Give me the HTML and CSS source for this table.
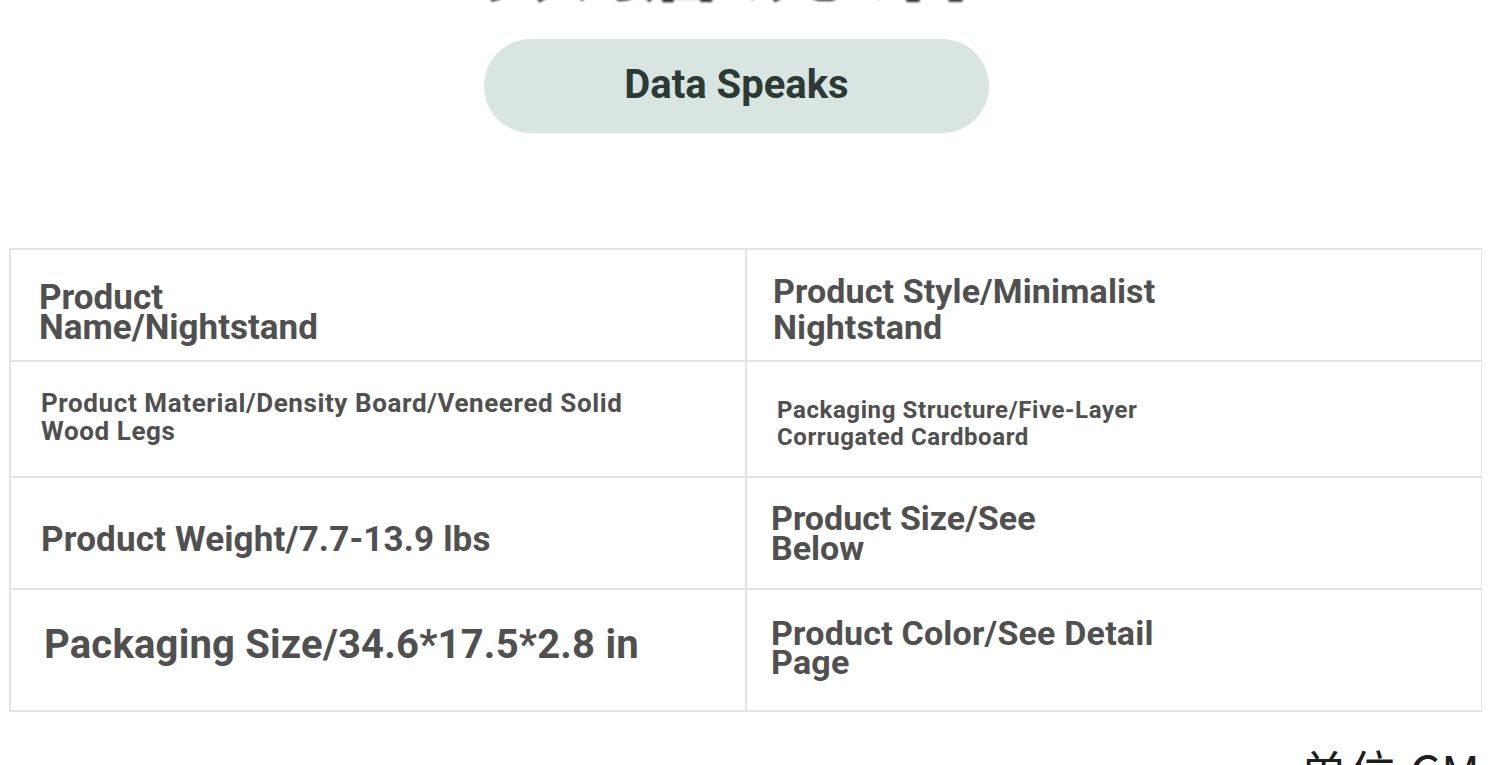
FILE: index.html
```html
<!DOCTYPE html>
<html lang="en">
<head>
<meta charset="utf-8">
<title>Data Speaks</title>
<link rel="stylesheet" href="styles.css">
</head>
<body>
<div class="page">
  <h1 class="title">数据说话</h1>
  <div class="pill">Data Speaks</div>
  <div class="specs">
    <div class="cell c1">Product<br>Name/Nightstand</div>
    <div class="cell c2">Product Style/Minimalist<br>Nightstand</div>
    <div class="cell c3">Product Material/Density Board/Veneered Solid<br>Wood Legs</div>
    <div class="cell c4">Packaging Structure/Five-Layer<br>Corrugated Cardboard</div>
    <div class="cell c5">Product Weight/7.7-13.9 lbs</div>
    <div class="cell c6">Product Size/See<br>Below</div>
    <div class="cell c7">Packaging Size/34.6*17.5*2.8 in</div>
    <div class="cell c8">Product Color/See Detail<br>Page</div>
  </div>
  <div class="unit">单位 CM</div>
</div>
</body>
</html>
```

FILE: styles.css
```css
html, body {
  margin: 0;
  padding: 0;
  background: #ffffff;
  overflow: hidden;
}

.page {
  width: 1500px;
  height: 765px;
  overflow: hidden;
  font-family: Roboto, "Liberation Sans", "Noto Sans CJK SC", sans-serif;
}

.title {
  margin: -112px 0 0 0;
  height: 112px;
  font-family: "Noto Sans CJK SC", sans-serif;
  font-size: 110px;
  line-height: 112px;
  font-weight: 700;
  color: #2a2a2a;
  text-align: center;
  letter-spacing: 16px;
  width: 1470px;
  filter: blur(1px);
}

.pill {
  margin: 39px 0 0 484px;
  width: 505px;
  height: 94px;
  border-radius: 47px;
  background: #d8e5e1;
  color: #2c3a35;
  font-size: 40px;
  font-weight: 700;
  display: flex;
  align-items: center;
  justify-content: center;
  box-sizing: border-box;
  padding: 0 0 4px 0;
}

.specs {
  margin: 115px 0 0 9px;
  width: 1473px;
  display: grid;
  grid-template-columns: 734px 734px;
  grid-template-rows: 110px 114px 110px 120px;
  gap: 2px;
  border: 2px solid #e3e3e3;
  background: #e3e3e3;
  box-sizing: border-box;
}

.cell {
  background: #ffffff;
  color: #505050;
  font-weight: 700;
  box-sizing: border-box;
}

.c1 { font-size: 35px; line-height: 30px; padding: 33px 0 0 28px; }
.c2 { font-size: 34px; line-height: 36px; padding: 23px 0 0 26px; letter-spacing: 0.1px; }
.c3 { font-size: 26px; line-height: 28px; padding: 27px 0 0 30px; letter-spacing: 0.6px; }
.c4 { font-size: 24px; line-height: 27px; padding: 35px 0 0 30px; letter-spacing: 0.6px; }
.c5 { font-size: 35px; line-height: 36px; padding: 44px 0 0 30px; letter-spacing: 0.15px; }
.c6 { font-size: 34px; line-height: 30px; padding: 25px 0 0 24px; }
.c7 { font-size: 40px; line-height: 44px; padding: 33px 0 0 33px; letter-spacing: 0.2px; }
.c8 { font-size: 34px; line-height: 29px; padding: 29px 0 0 24px; letter-spacing: 0.2px; }

.unit {
  margin: 28px 0 0 0;
  width: 1481px;
  text-align: right;
  font-family: "Noto Sans CJK SC", sans-serif;
  font-size: 48px;
  line-height: 60px;
  letter-spacing: 1px;
  color: #1e1e1e;
}
```
